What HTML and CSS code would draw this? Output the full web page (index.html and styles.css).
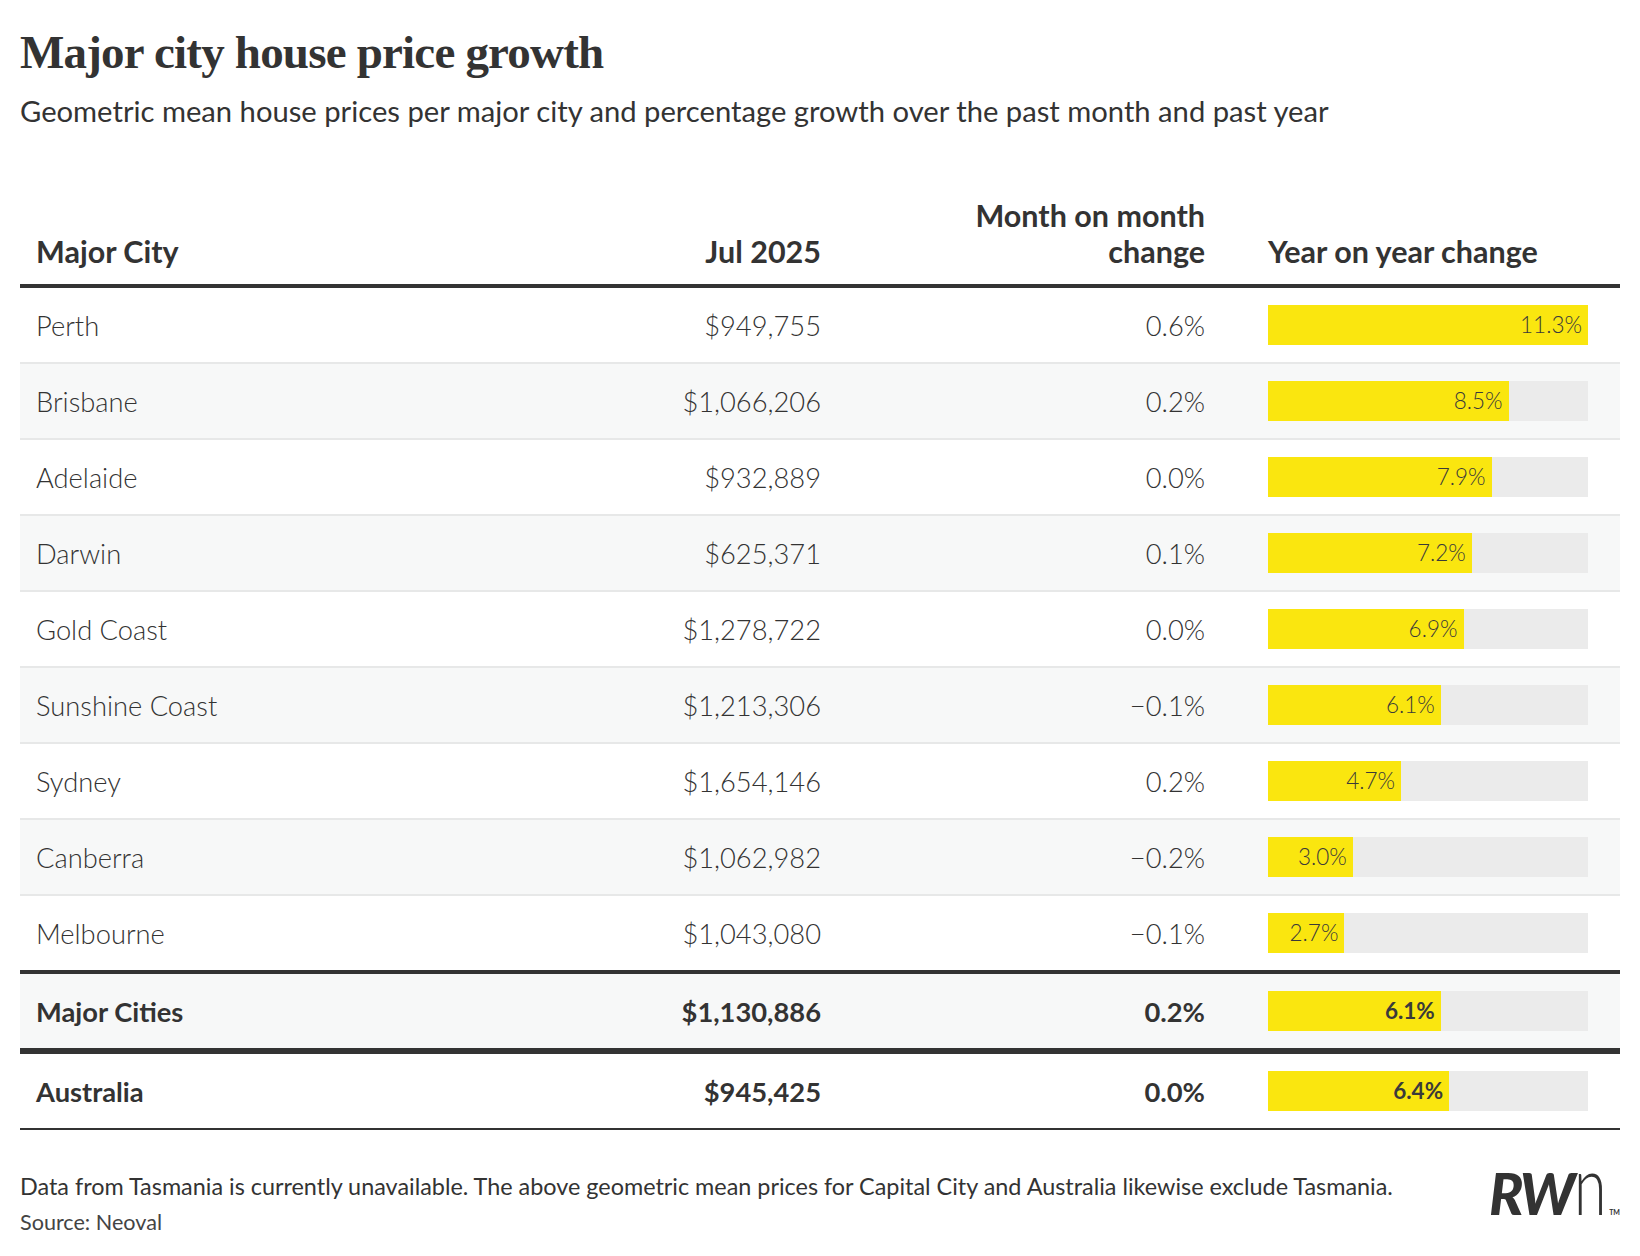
FILE: index.html
```html
<!DOCTYPE html>
<html lang="en">
<head>
<meta charset="utf-8">
<title>Major city house price growth</title>
<link rel="stylesheet" href="styles.css">
</head>
<body>
<main class="page">
  <h1 class="title">Major city house price growth</h1>
  <p class="subtitle">Geometric mean house prices per major city and percentage growth over the past month and past year</p>

  <div class="table">
    <div class="row head">
      <div class="cell city">Major City</div>
      <div class="cell num">Jul 2025</div>
      <div class="cell num">Month on month<br>change</div>
      <div class="cell year">Year on year change</div>
    </div>

    <div class="row">
      <div class="cell city">Perth</div>
      <div class="cell num">$949,755</div>
      <div class="cell num">0.6%</div>
      <div class="cell year"><div class="track"><div class="fill" style="width:100%">11.3%</div></div></div>
    </div>
    <div class="row alt">
      <div class="cell city">Brisbane</div>
      <div class="cell num">$1,066,206</div>
      <div class="cell num">0.2%</div>
      <div class="cell year"><div class="track"><div class="fill" style="width:75.2%">8.5%</div></div></div>
    </div>
    <div class="row">
      <div class="cell city">Adelaide</div>
      <div class="cell num">$932,889</div>
      <div class="cell num">0.0%</div>
      <div class="cell year"><div class="track"><div class="fill" style="width:69.9%">7.9%</div></div></div>
    </div>
    <div class="row alt">
      <div class="cell city">Darwin</div>
      <div class="cell num">$625,371</div>
      <div class="cell num">0.1%</div>
      <div class="cell year"><div class="track"><div class="fill" style="width:63.7%">7.2%</div></div></div>
    </div>
    <div class="row">
      <div class="cell city">Gold Coast</div>
      <div class="cell num">$1,278,722</div>
      <div class="cell num">0.0%</div>
      <div class="cell year"><div class="track"><div class="fill" style="width:61.1%">6.9%</div></div></div>
    </div>
    <div class="row alt">
      <div class="cell city">Sunshine Coast</div>
      <div class="cell num">$1,213,306</div>
      <div class="cell num">&minus;0.1%</div>
      <div class="cell year"><div class="track"><div class="fill" style="width:54%">6.1%</div></div></div>
    </div>
    <div class="row">
      <div class="cell city">Sydney</div>
      <div class="cell num">$1,654,146</div>
      <div class="cell num">0.2%</div>
      <div class="cell year"><div class="track"><div class="fill" style="width:41.6%">4.7%</div></div></div>
    </div>
    <div class="row alt">
      <div class="cell city">Canberra</div>
      <div class="cell num">$1,062,982</div>
      <div class="cell num">&minus;0.2%</div>
      <div class="cell year"><div class="track"><div class="fill" style="width:26.5%">3.0%</div></div></div>
    </div>
    <div class="row last">
      <div class="cell city">Melbourne</div>
      <div class="cell num">$1,043,080</div>
      <div class="cell num">&minus;0.1%</div>
      <div class="cell year"><div class="track"><div class="fill" style="width:23.9%">2.7%</div></div></div>
    </div>

    <div class="row total alt">
      <div class="cell city">Major Cities</div>
      <div class="cell num">$1,130,886</div>
      <div class="cell num">0.2%</div>
      <div class="cell year"><div class="track"><div class="fill" style="width:54%">6.1%</div></div></div>
    </div>
    <div class="row total aus">
      <div class="cell city">Australia</div>
      <div class="cell num">$945,425</div>
      <div class="cell num">0.0%</div>
      <div class="cell year"><div class="track"><div class="fill" style="width:56.6%">6.4%</div></div></div>
    </div>
  </div>

  <footer class="footer">
    <div class="notes">
      <p class="note">Data from Tasmania is currently unavailable. The above geometric mean prices for Capital City and Australia likewise exclude Tasmania.</p>
      <p class="source">Source: Neoval</p>
    </div>
    <div class="logo"><span class="logo-rw">RW</span><span class="logo-n">n</span><span class="logo-tm">TM</span></div>
  </footer>
</main>
</body>
</html>
```

FILE: styles.css
```css
html, body {
  margin: 0;
  padding: 0;
  background: #ffffff;
}

body {
  font-family: Lato, "Noto Sans", sans-serif;
  color: #333333;
}

.page {
  padding: 24px 20px 0 20px;
}

.title {
  margin: 0;
  font-family: "Liberation Serif", "DejaVu Serif", serif;
  font-weight: 700;
  font-size: 47px;
  line-height: 56px;
  letter-spacing: -0.8px;
  color: #333333;
}

.subtitle {
  margin: 13px 0 0 0;
  font-size: 29.2px;
  line-height: 36px;
  font-weight: 400;
  color: #333333;
}

.table {
  margin-top: 68px;
  width: 1600px;
}

.row {
  display: grid;
  grid-template-columns: 1fr 300px 384px 383px;
  align-items: center;
  padding: 0 32px 0 16px;
  height: 74px;
  border-bottom: 2px solid #e7e8e8;
  font-weight: 300;
  font-size: 27.3px;
}

.row.alt {
  background: #f7f8f8;
}

.row.head {
  height: auto;
  align-items: end;
  padding-bottom: 15px;
  border-bottom: 4px solid #333333;
  font-weight: 700;
  font-size: 30.5px;
  line-height: 36px;
}

.row.last {
  border-bottom: 4px solid #333333;
}

.row.total {
  font-weight: 700;
  border-bottom: 6px solid #333333;
}

.row.total.aus {
  border-bottom: 2px solid #333333;
}

.cell.city {
  text-align: left;
}

.cell.num {
  text-align: right;
}

.cell.year {
  padding-left: 63px;
}

.track {
  width: 320px;
  height: 40px;
  background: #ebebeb;
}

.fill {
  height: 40px;
  background: #fae60f;
  box-sizing: border-box;
  padding-right: 6px;
  text-align: right;
  font-size: 22.5px;
  line-height: 40px;
  white-space: nowrap;
  color: #3a3a3a;
}

.footer {
  display: flex;
  justify-content: space-between;
  align-items: flex-start;
  width: 1600px;
  margin-top: 38px;
}

.note, .source {
  margin: 0;
  line-height: 36px;
  font-weight: 400;
  color: #333333;
}

.note {
  font-size: 23.4px;
}

.source {
  font-size: 21.6px;
  color: #444444;
}

.logo {
  display: flex;
  align-items: baseline;
  margin-top: -10px;
  color: #333333;
  line-height: 50px;
}

.logo-rw {
  font-family: Lato, sans-serif;
  font-weight: 900;
  font-style: italic;
  font-size: 57px;
  letter-spacing: -3px;
}

.logo-n {
  display: inline-block;
  font-family: Lato, sans-serif;
  font-weight: 300;
  font-size: 82px;
  margin-left: 2px;
  width: 32px;
  transform: scaleX(0.72);
  transform-origin: left bottom;
}

.logo-tm {
  font-size: 7px;
  font-weight: 700;
  margin-left: 3px;
}
```
